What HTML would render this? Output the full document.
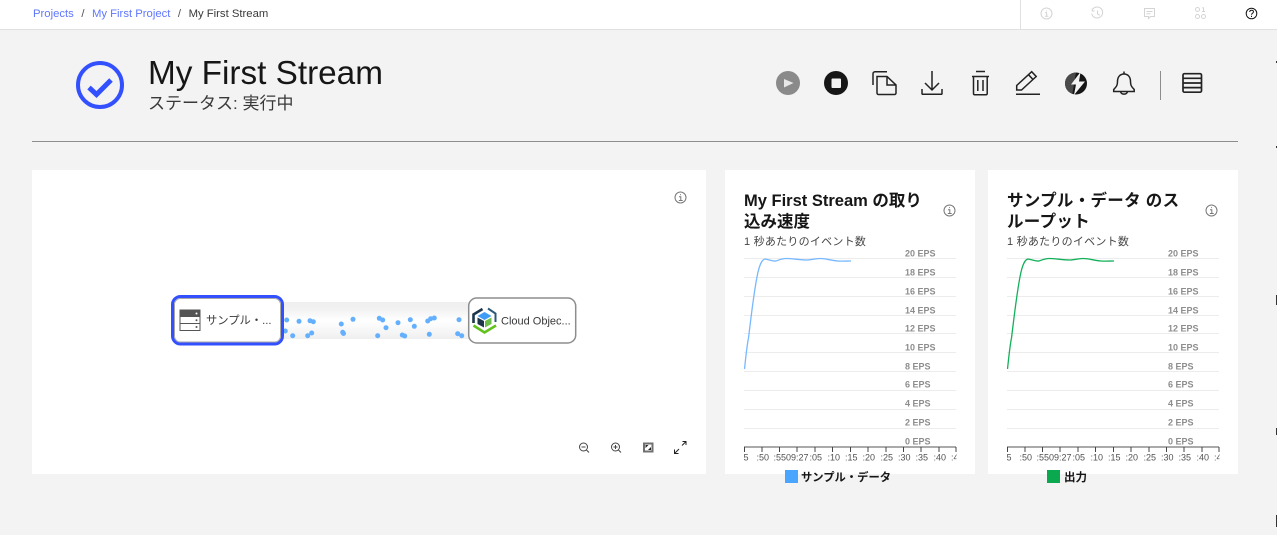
<!DOCTYPE html>
<html><head><meta charset="utf-8"><style>
*{box-sizing:border-box}
html,body{margin:0;padding:0}
body{width:1277px;height:535px;overflow:hidden;background:#f3f3f3;position:relative;font-family:"Liberation Sans","Noto Sans CJK JP",sans-serif;color:#161616}
.a{position:absolute;white-space:nowrap}
.card{position:absolute;background:#fff;top:170px;height:304px}
svg{position:absolute;left:0;top:0}
svg text{font-family:"Liberation Sans","Noto Sans CJK JP",sans-serif}
.t{font-size:16.5px;font-weight:700;line-height:21px;color:#161616}
.s{font-size:11px;color:#444;line-height:14px;letter-spacing:.25px}
</style></head><body>
<div class="a" style="left:0;top:0;width:1277px;height:30px;background:#fff;border-bottom:1px solid #e0e0e0"></div>
<div class="a" style="left:1020px;top:0;width:1px;height:29px;background:#e0e0e0"></div>
<div class="a" style="left:33px;top:7px;font-size:11.3px;line-height:15px;color:#525252"><span style="color:#5f77ff">Projects</span><span style="margin:0 7.5px">/</span><span style="color:#5f77ff">My First Project</span><span style="margin:0 7.5px">/</span><span style="color:#393939">My First Stream</span></div>
<div class="a" style="left:148px;top:54px;font-size:33.3px;line-height:40px;color:#161616">My First Stream</div>
<div class="a" style="left:148px;top:93px;font-size:17px;line-height:21px;color:#393939">ステータス: 実行中</div>
<div class="a" style="left:32px;top:141px;width:1206px;height:1px;background:#8d8d8d"></div>
<div class="card" style="left:32px;width:674px"></div>
<div class="card" style="left:725px;width:250px"></div>
<div class="card" style="left:988px;width:250px"></div>

<svg width="1277" height="535" viewBox="0 0 1277 535" fill="none">
<defs>
<linearGradient id="p" x1="0" y1="0" x2="0" y2="1"><stop offset="0" stop-color="#efefef"/><stop offset=".2" stop-color="#f2f2f2"/><stop offset=".5" stop-color="#fff"/><stop offset=".85" stop-color="#f4f4f4"/><stop offset="1" stop-color="#efefef"/></linearGradient>
<clipPath id="ax"><rect x="744" y="440" width="212.500" height="30"/></clipPath>
<clipPath id="bl"><circle cx="1076" cy="83.500" r="11"/></clipPath>
<g id="grid" stroke="#ececec" stroke-width="1">
<path d="M744 258.500H956M744 277.500H956M744 296.500H956M744 315.500H956M744 333.500H956M744 352.500H956M744 371.500H956M744 390.500H956M744 409.500H956M744 428.500H956"/>
</g>
<g id="axis">
<path d="M744 447H956" stroke="#8d8d8d" stroke-width="1.500"/>
<path d="M744.500 447v5M762 447v5M779.500 447v5M797 447v5M815 447v5M832.500 447v5M850.500 447v5M868 447v5M886 447v5M903.500 447v5M921 447v5M939 447v5M956 447v5" stroke="#444" stroke-width="1"/>
<g font-size="9" fill="#8d8d8d" font-weight="700">
<text x="905" y="256.500">20 EPS</text><text x="905" y="275.500">18 EPS</text><text x="905" y="294.500">16 EPS</text><text x="905" y="313.500">14 EPS</text><text x="905" y="331.500">12 EPS</text><text x="905" y="350.500">10 EPS</text><text x="905" y="369.500">8 EPS</text><text x="905" y="387.500">6 EPS</text><text x="905" y="406.500">4 EPS</text><text x="905" y="425.500">2 EPS</text><text x="905" y="444.500">0 EPS</text>
</g>
<g font-size="9" fill="#525252" clip-path="url(#ax)">
<text x="741" y="460.500">:5</text><text x="756.500" y="460.500">:50</text><text x="773.500" y="460.500">:55</text><text x="786" y="460.500">09:27</text><text x="809.500" y="460.500">:05</text><text x="827.500" y="460.500">:10</text><text x="845" y="460.500">:15</text><text x="862.500" y="460.500">:20</text><text x="880.500" y="460.500">:25</text><text x="898" y="460.500">:30</text><text x="915.500" y="460.500">:35</text><text x="933.500" y="460.500">:40</text><text x="951" y="460.500">:4</text>
</g>
</g>
<path id="ln" d="M744.500 369C746 355 747 345 748.500 338C751 318 754 290 758 272C760 264 762 259.500 765 259C769 259.500 772 261.500 776 261C779 260 782 258.500 786 258.500C792 258.500 800 260 807 260C811 260 815 258.500 820 258.500C826 258.500 831 260.500 838 261C842 261.300 847 261 851 261"/>
<g id="i" stroke="#777" stroke-width="1"><circle cx="0" cy="0" r="5.500"/><path d="M-1.500 -.8H.3V3M-1.700 3H2.200M0 -3.200V-2.400"/></g>
</defs>

<!-- top bar icons -->
<g stroke="#d4d4d4" stroke-width="1">
<circle cx="1046.500" cy="13.500" r="5.500"/><path d="M1045 12.700h1.700v3.600M1044.800 16.300h3.600M1046.500 10.500v.9"/>
<path d="M1092.500 9.500a5.500 5.500 0 1 1-.8 4M1092.200 8.500v2.500h2.500M1097.500 10.500v3.300l2.200 1.500"/>
<path d="M1144.500 8.500h10v8h-4l-2 2v-2h-4zM1146.500 11.500h6M1146.500 13.700h4"/>
<circle cx="1197.500" cy="9.500" r="2"/><circle cx="1197.500" cy="16.500" r="2"/><circle cx="1203.500" cy="16.500" r="2"/><path d="M1203.500 7.500v4M1202 11.500h3M1202.300 8l1.200-.5"/>
</g>
<g stroke="#161616" stroke-width="1"><circle cx="1251.500" cy="13.500" r="5.300"/><path d="M1249.700 12c0-2.300 3.800-2.400 3.800-.2 0 1.400-2 1.400-2 3"/><path d="M1251.500 15.800v1.200"/></g>

<!-- status -->
<circle cx="100" cy="85" r="22" stroke="#3350ff" stroke-width="4"/>
<path d="M89 87.500L96.500 94.500L111 80" stroke="#3350ff" stroke-width="5"/>

<!-- toolbar -->
<circle cx="788" cy="83" r="12" fill="#8a8a8a"/><path d="M784 79L793.500 83L784 87.500Z" fill="#e8e8e8"/>
<circle cx="836" cy="83" r="12" fill="#161616"/><rect x="831.500" y="78.500" width="9.500" height="9.500" rx="1" fill="#f3f3f3"/>
<g stroke="#222" stroke-width="1.500">
<path d="M887 71.700H875a2 2 0 0 0-2 2V85"/>
<path d="M877 76.500h10l9 8.500v8a1.500 1.500 0 0 1-1.500 1.500H878.500a1.500 1.500 0 0 1-1.500-1.500zM887 76.500v8.500h9"/>
<path d="M932 71v19M925 83L932 90L939 83M922 89v4.500a.8.8 0 0 0 .8.8H941.200a.8.800 0 0 0 .8-.8V89"/>
<path d="M972 76.500H989M976 71.500H985M973.500 76.500V93.500a1.200 1.200 0 0 0 1.200 1.200H986a1.200 1.200 0 0 0 1.200-1.200V76.500M977.800 80V91M983 80V91"/>
<path d="M1016.700 90V85.500L1031.700 71.700L1036.200 76.500L1021.500 90ZM1028.500 74.700L1033 79.500"/>
<path d="M1016 94.300H1040" stroke-width="1.500"/>
<path d="M1124 71.500v2.500M1124 74c-4 0-6.500 3-6.500 7.500 0 4-1 5-3.800 8v2h20.500v-2c-2.700-3-3.700-4-3.700-8 0-4.500-2.500-7.500-6.500-7.500ZM1120.500 91.500c.5 3.500 6.500 3.500 7 0"/>
<rect x="1183" y="73.700" width="18.500" height="18.500" rx="1.500" stroke-width="1.700"/><path d="M1183 78.300H1201.500M1183 83H1201.500M1183 87.600H1201.500" stroke-width="1.700"/>
</g>
<g clip-path="url(#bl)"><rect x="1064" y="72" width="24" height="24" fill="#161616"/><path d="M1064 72H1076L1072 96H1064Z" fill="#4a4a4a"/></g>
<path d="M1080.500 72L1071 84.500H1076L1074 95L1085 81.500H1079Z" fill="#f3f3f3"/>
<path d="M1160.500 71V100" stroke="#8d8d8d" stroke-width="1"/>

<!-- pipe -->
<rect x="280" y="302" width="192" height="37" fill="url(#p)"/>
<g fill="#64b0ff">
<circle cx="286.700" cy="320" r="2.500"/><circle cx="299" cy="321.300" r="2.500"/><circle cx="310" cy="320.700" r="2.500"/><circle cx="313.300" cy="321.700" r="2.500"/><circle cx="341.300" cy="324" r="2.500"/><circle cx="353" cy="319.300" r="2.500"/><circle cx="379.300" cy="318.300" r="2.500"/><circle cx="382.700" cy="320" r="2.500"/><circle cx="398" cy="322.700" r="2.500"/><circle cx="410.300" cy="319.700" r="2.500"/><circle cx="414.300" cy="326.300" r="2.500"/><circle cx="427.700" cy="321" r="2.500"/><circle cx="430.700" cy="318.700" r="2.500"/><circle cx="434.300" cy="318" r="2.500"/><circle cx="459" cy="319.700" r="2.500"/><circle cx="386" cy="327.700" r="2.500"/>
<circle cx="285.300" cy="331" r="2.500"/><circle cx="292.700" cy="335.700" r="2.500"/><circle cx="307.700" cy="335.700" r="2.500"/><circle cx="311.700" cy="333" r="2.500"/><circle cx="342.700" cy="332.300" r="2.500"/><circle cx="343.500" cy="333.500" r="2.500"/><circle cx="377.700" cy="335.700" r="2.500"/><circle cx="402.300" cy="335" r="2.500"/><circle cx="404.700" cy="336" r="2.500"/><circle cx="429.300" cy="334.300" r="2.500"/><circle cx="457.700" cy="333.700" r="2.500"/><circle cx="461.700" cy="335.700" r="2.500"/>
</g>

<!-- source node -->
<rect x="172.500" y="296.500" width="110" height="47.500" rx="8" fill="#fff" stroke="#3350ff" stroke-width="3"/>
<rect x="174.500" y="298.500" width="106" height="43.500" rx="6" stroke="#a8a8a8" stroke-width="1"/>
<rect x="180" y="310" width="20" height="20.500" fill="#fff" stroke="#555" stroke-width="1"/>
<rect x="180" y="310" width="20" height="7" fill="#555"/>
<path d="M180 323.500H200" stroke="#555"/>
<circle cx="196.500" cy="313.500" r="1" fill="#fff"/><circle cx="196.500" cy="320.300" r="1" fill="#555"/><circle cx="196.500" cy="327" r="1" fill="#555"/>
<text x="206" y="324" font-size="11.300" fill="#393939">サンプル・...</text>

<!-- target node -->
<rect x="468.700" y="298" width="107" height="45" rx="8" fill="#fff" stroke="#8d8d8d" stroke-width="1.500"/>
<path d="M473.500 323V314.500L482.500 309" stroke="#1d3649" stroke-width="2.600"/>
<path d="M488 308.500L495.500 313.500V322" stroke="#2a5a78" stroke-width="2"/>
<path d="M484.500 312L491.500 316L484.500 320L477.500 316Z" fill="#3f9df5"/>
<path d="M477.500 317.500L484 321V327.500L477.500 324Z" fill="#1d3649"/>
<path d="M485 321L491.500 317.500V324L485 327.500Z" fill="#6cc04a"/>
<path d="M473.500 325.500L484.500 332.500L496 325.500" stroke="#62c21d" stroke-width="2.600"/>
<text x="501" y="324.500" font-size="11" fill="#393939">Cloud Objec...</text>

<!-- canvas icons -->
<g transform="translate(680.500 197.500)"><use href="#i"/></g>
<g stroke="#444" stroke-width="1">
<circle cx="583.500" cy="447" r="4"/><path d="M581.500 447H585.500M586.500 450L589 452.500"/>
<circle cx="615.500" cy="447" r="4"/><path d="M613.500 447H617.500M615.500 445V449M618.500 450L621 452.500"/>
<path d="M675 453L679 449M682 445.500L686 441.500M682.500 441.500H686V445M674.500 449.500V453.500H678.500" stroke="#222"/>
</g>
<rect x="644" y="443.500" width="8.500" height="8" stroke="#707070" stroke-width="2"/>
<path d="M645.500 445h3l-3 3zM651 450h-3l3-3z" fill="#222"/>

<!-- chart 1 -->
<use href="#grid"/><use href="#axis"/>
<use href="#ln" stroke="#78b8ff" stroke-width="1.300"/>
<g transform="translate(949.500 210.500)"><use href="#i"/></g>

<!-- chart 2 -->
<g transform="translate(263 0)">
<use href="#grid"/><use href="#axis"/>
<use href="#ln" stroke="#12b05a" stroke-width="1.300"/>
</g>
<g transform="translate(1211.500 210.500)"><use href="#i"/></g>

<!-- legends -->
<rect x="785" y="470" width="13" height="13" fill="#4aa5ff"/>
<rect x="1047" y="470" width="13" height="13" fill="#0aa84f"/>
<text x="801" y="481" font-size="11.300" font-weight="700" fill="#161616">サンプル・データ</text>
<text x="1064" y="481" font-size="11.500" font-weight="700" fill="#161616">出力</text>

<!-- edge marks -->
<path d="M1276.500 61V63M1276.500 146V148M1276.500 295V305M1276.500 428V435M1276.500 515V527" stroke="#333"/>
</svg>

<div class="a t" style="left:744px;top:190.500px;width:190px;white-space:normal">My First Stream の取り<br>込み速度</div>
<div class="a s" style="left:744px;top:235px">1 秒あたりのイベント数</div>
<div class="a t" style="left:1007px;top:190.500px;width:190px;white-space:normal;letter-spacing:.3px">サンプル・データ のス<br>ループット</div>
<div class="a s" style="left:1007px;top:235px">1 秒あたりのイベント数</div>
</body></html>
